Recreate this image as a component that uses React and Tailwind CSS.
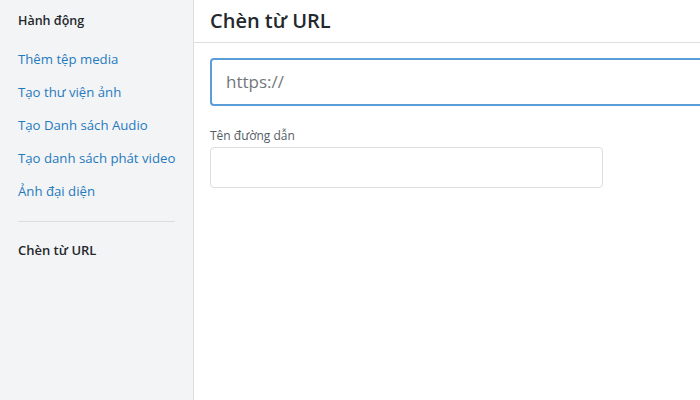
export default function App() {
  const links = ['Thêm tệp media', 'Tạo thư viện ảnh', 'Tạo Danh sách Audio', 'Tạo danh sách phát video', 'Ảnh đại diện'];

  return (
    <div className="flex w-[700px] h-[400px] overflow-hidden bg-white" style={{ fontFamily: '"Open Sans", "Noto Sans", sans-serif' }}>
      {/* Sidebar */}
      <div className="w-[194px] shrink-0 bg-[#f3f4f5] border-r border-[#dddddd] pt-[12px]">
        <h2 className="px-[18px] text-[12.5px] font-semibold text-[#23282d] leading-[18px]">Hành động</h2>
        <div className="mt-[13px] flex flex-col">
          {links.map((l) => (
            <a key={l} className="px-[18px] text-[13.2px] leading-[33px] whitespace-nowrap text-[#1f7ac0]">{l}</a>
          ))}
        </div>
        <div className="mx-[18px] mt-[13px] h-px bg-[#dddddd]" />
        <div className="px-[18px] mt-[12px] text-[13px] font-semibold text-[#23282d] leading-[33px]">Chèn từ URL</div>
      </div>

      {/* Main */}
      <div className="flex-1 min-w-0">
        <div className="h-[43px] border-b border-[#dddddd] px-[16px] flex items-center">
          <h1 className="text-[20px] font-semibold text-[#23282d] leading-none">Chèn từ URL</h1>
        </div>
        <div className="pl-[16px] pt-[15px]">
          <div className="w-[520px] h-[48px] border-2 border-[#5b9dd9] rounded-[4px] flex items-center px-[14px] text-[17px] text-[#72777c]">
            https://
          </div>
          <label className="block mt-[22px] text-[12px] text-[#555d66] leading-[16px]">Tên đường dẫn</label>
          <div className="mt-[3px] w-[393px] h-[41px] border border-[#dddddd] rounded-[4px] bg-white" />
        </div>
      </div>
    </div>
  );
}
